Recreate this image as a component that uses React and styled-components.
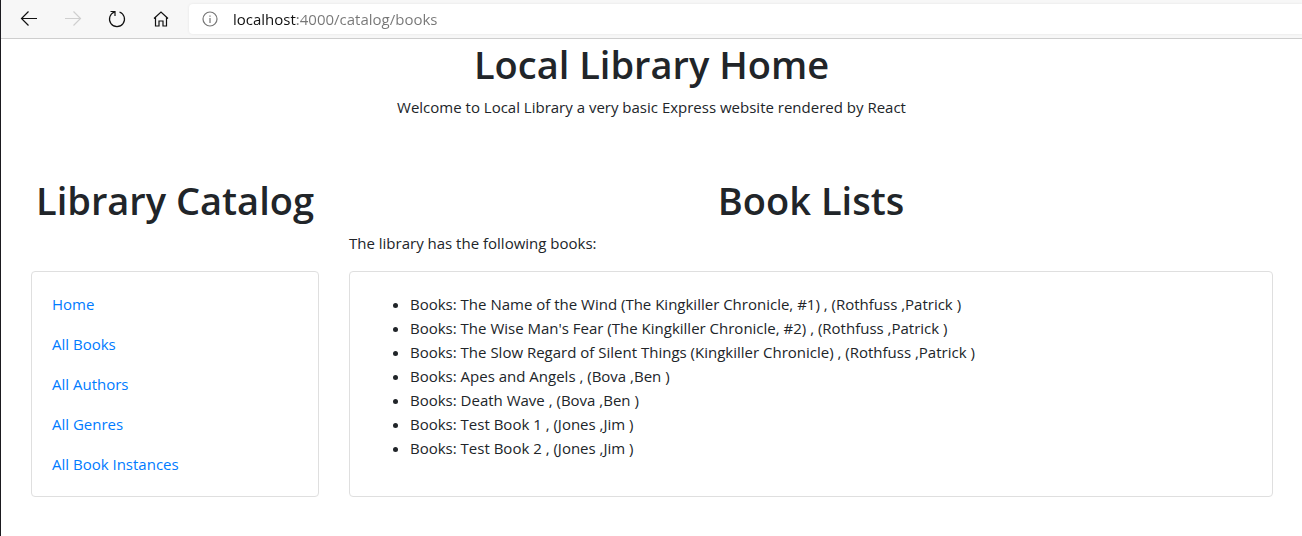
import React, { useState } from "react";
import styled, { createGlobalStyle } from "styled-components";

const GlobalStyle = createGlobalStyle`
  *, *::before, *::after { box-sizing: border-box; }
  body {
    margin: 0;
    background: #fff;
    color: #212529;
    font-family: "Open Sans", "Noto Sans", sans-serif;
    font-size: 15px;
    line-height: 24px;
  }
`;

const Window = styled.div`
  min-height: 100vh;
  border-left: 1px solid #1b1a1f;
`;

const Toolbar = styled.header`
  display: flex;
  align-items: center;
  height: 39px;
  padding-left: 16px;
  background: #f7f7f7;
  border-bottom: 1px solid #cecece;
`;

const ToolButton = styled.button`
  display: flex;
  padding: 0;
  margin-right: 20px;
  border: 0;
  background: none;
  color: ${(p) => (p.disabled ? "#cfcfcf" : "#111")};
`;

const Address = styled.label`
  flex: 1;
  display: flex;
  align-items: center;
  gap: 15px;
  height: 30px;
  margin-left: -4px;
  padding-left: 13px;
  border-radius: 4px 0 0 4px;
  background: #fff;
  box-shadow: 0 0 3px rgba(0, 0, 0, 0.08);
  color: #767676;
`;

const AddressInput = styled.input`
  flex: 1;
  min-width: 0;
  height: 24px;
  padding: 0;
  border: 0;
  outline: 0;
  font: inherit;
  color: transparent;
  caret-color: #111;
  background: linear-gradient(90deg, #111 64px, #767676 64px);
  background-clip: text;
  -webkit-background-clip: text;
`;

const Title = styled.h1`
  margin: 0 0 6px;
  font-size: 38px;
  font-weight: 600;
  line-height: 50px;
  text-align: center;
`;

const Intro = styled.div`
  text-align: center;
`;

const Text = styled.p`
  min-height: 24px;
  margin: 0 0 16px;
`;

const Columns = styled.main`
  display: flex;
  margin-top: 56px;
  padding: 0 14px 0 15px;
`;

const Column = styled.section`
  flex: 0 0 ${(p) => p.$share};
  min-width: 0;
  padding: 0 15px;
`;

const Card = styled.div`
  padding: 20px;
  border: 1px solid #dfdfdf;
  border-radius: 4px;
`;

const LinkList = styled.nav`
  display: flex;
  flex-direction: column;
  align-items: flex-start;
  gap: 16px;
`;

const NavLink = styled.a`
  color: #007bff;
  text-decoration: none;
  &:hover { text-decoration: underline; }
`;

const BookList = styled.ul`
  margin: 0 0 16px;
  padding-left: 40px;
`;

const Icon = ({ size = 24, children }) => (
  <svg width={size} height={size} viewBox={`0 0 ${size} ${size}`} fill="none" stroke="currentColor" strokeWidth="1.2" aria-hidden="true">
    {children}
  </svg>
);

const links = ["Home", "All Books", "All Authors", "All Genres", "All Book Instances"];

const books = [
  ["The Name of the Wind (The Kingkiller Chronicle, #1)", "Rothfuss ,Patrick"],
  ["The Wise Man's Fear (The Kingkiller Chronicle, #2)", "Rothfuss ,Patrick"],
  ["The Slow Regard of Silent Things (Kingkiller Chronicle)", "Rothfuss ,Patrick"],
  ["Apes and Angels", "Bova ,Ben"],
  ["Death Wave", "Bova ,Ben"],
  ["Test Book 1", "Jones ,Jim"],
  ["Test Book 2", "Jones ,Jim"],
];

export default function App() {
  const [url, setUrl] = useState("localhost:4000/catalog/books");
  return (
    <Window>
      <GlobalStyle />
      <Toolbar>
        <ToolButton aria-label="Back">
          <Icon><path d="M20 11.500H4.500M11.500 4.500L4.500 11.500l7 7" /></Icon>
        </ToolButton>
        <ToolButton aria-label="Forward" disabled>
          <Icon><path d="M4 11.500H19.500M12.500 4.500l7 7-7 7" /></Icon>
        </ToolButton>
        <ToolButton aria-label="Refresh">
          <Icon><path d="M14.500 5A7.500 7.500 0 1 1 9.500 5M5.500 4.500h4.500v4.500" /></Icon>
        </ToolButton>
        <ToolButton aria-label="Home page">
          <Icon><path d="M5 11.500L12 5l7 6.500M6.500 10.500v8.500h3.500v-5h4v5h3.500v-8.500" /></Icon>
        </ToolButton>
        <Address>
          <Icon size={16}>
            <circle cx="8" cy="8" r="7" />
            <path d="M8 7v5M8 4.500v1.300" />
          </Icon>
          <AddressInput aria-label="Address" value={url} onChange={(e) => setUrl(e.target.value)} />
        </Address>
      </Toolbar>
      <Intro>
        <Title>Local Library Home</Title>
        <Text>Welcome to Local Library a very basic Express website rendered by React</Text>
      </Intro>
      <Columns>
        <Column $share="25%">
          <Title as="h2">Library Catalog</Title>
          <Text />
          <Card>
            <LinkList>
              {links.map((label) => (
                <NavLink key={label} href="#">{label}</NavLink>
              ))}
            </LinkList>
          </Card>
        </Column>
        <Column $share="75%">
          <Title as="h2">Book Lists</Title>
          <Text>The library has the following books:</Text>
          <Card>
            <BookList>
              {books.map(([title, author]) => (
                <li key={title}>{`Books: ${title} , (${author} )`}</li>
              ))}
            </BookList>
          </Card>
        </Column>
      </Columns>
    </Window>
  );
}
